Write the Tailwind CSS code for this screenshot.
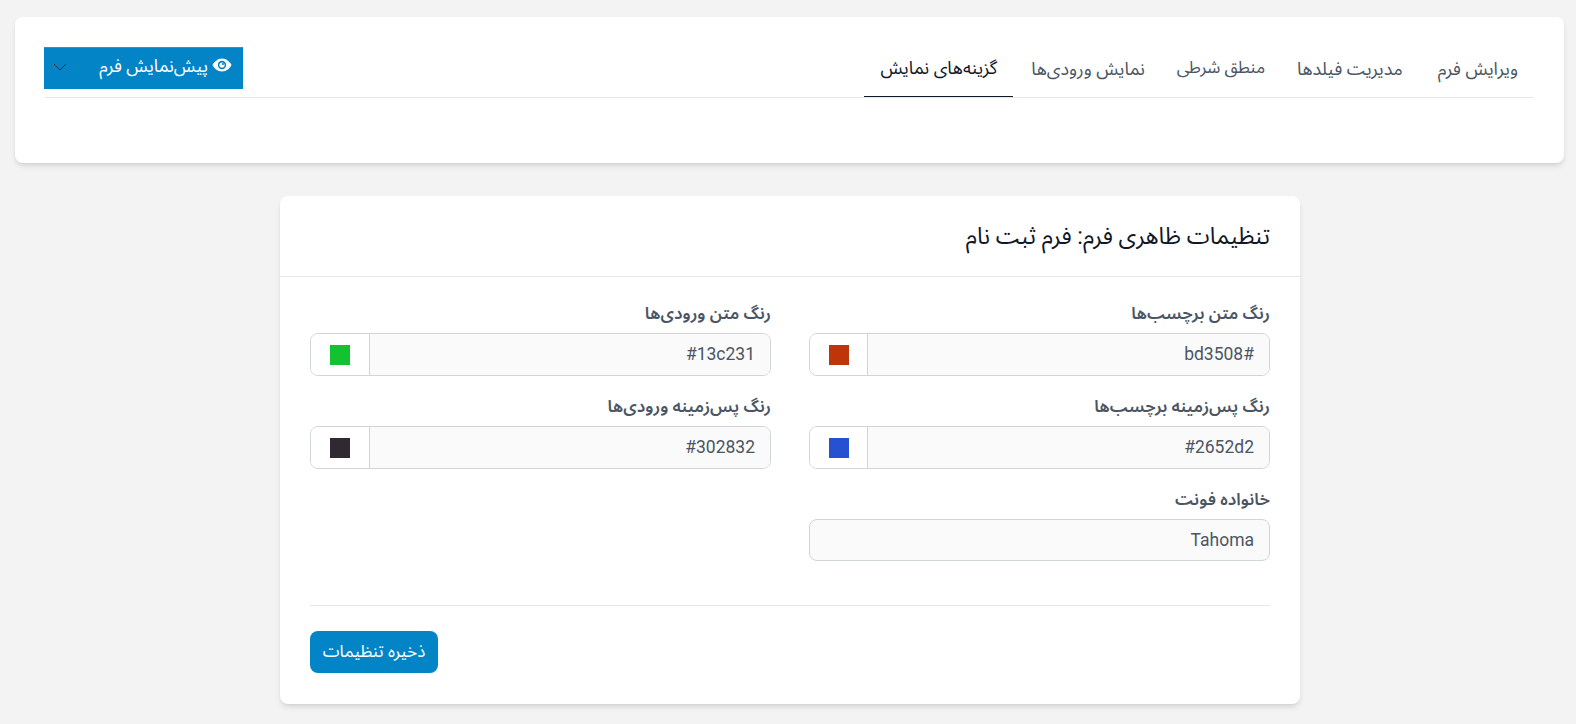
<!DOCTYPE html>
<html lang="fa" dir="rtl">
<head>
    <meta charset="UTF-8">
    <meta name="viewport" content="width=device-width, initial-scale=1.0">
    <title>تنظیمات ظاهری فرم</title>
    <script src="https://cdn.jsdelivr.net/npm/@tailwindcss/browser@4"></script>
</head>
<body class="bg-[#f3f3f3] min-h-screen font-['Roboto','Noto_Sans_Arabic','Vazirmatn','DejaVu_Sans',sans-serif] overflow-hidden">
    <div class="pt-[17px] pr-[12px] pl-[15px]">
        <!-- Top card with tabs -->
        <div class="h-[146px] bg-white rounded-lg shadow-md pt-[30px] pr-[30px] pl-[30px]">
            <div class="flex items-end justify-between h-[51px] border-b border-[#e5e7eb]">
                <nav class="flex h-[51px] text-[18px] text-[#4b5563]">
                    <a class="flex items-center pb-[7px] pr-4 pl-[17px]">ویرایش فرم</a>
                    <a class="flex items-center pb-[7px] px-[18px]">مدیریت فیلدها</a>
                    <a class="flex items-center justify-center pb-[7px] w-[116px] text-[17px]">منطق شرطی</a>
                    <a class="flex items-center pb-[7px] px-[18px]">نمایش ورودی‌ها</a>
                    <a class="flex items-center pb-[7px] px-4 text-[#111827] border-b border-[#111827] h-[51px]">گزینه‌های نمایش</a>
                </nav>
                <div class="flex items-center justify-between w-[199px] h-[42px] mb-[8px] -ml-px bg-[#0284c7] border-t border-[#2b93cc] pr-[11px] pl-[9px]">
                    <span class="flex items-center gap-1 text-white text-[17.6px] leading-none -mt-[4px]">
                        <svg class="w-5 h-5 -mt-1" viewBox="0 0 20 20" fill="white"><path d="M10 3.500C5.500 3.500 2 7 .5 10 2 13 5.500 16.500 10 16.500S18 13 19.500 10C18 7 14.500 3.500 10 3.500Z"/><circle cx="10" cy="10" r="4.200" fill="#0284c7"/><circle cx="10" cy="10" r="2.600" fill="white"/><circle cx="11" cy="9" r="1" fill="#0284c7"/></svg>
                        پیش‌نمایش فرم
                    </span>
                    <svg class="w-[14px] h-[8px] -mt-1" viewBox="0 0 14 8" fill="none" stroke="#1f2937" stroke-width="1"><path d="M1 1l6 6 6-6"/></svg>
                </div>
            </div>
        </div>

        <!-- Settings card -->
        <div class="w-[1020px] h-[508px] mt-[33px] mr-[264px] bg-white rounded-lg shadow-md">
            <div class="h-[81px] flex items-center px-[30px] pt-px border-b border-[#e5e7eb]">
                <h2 class="text-[23.2px] text-[#111827]">تنظیمات ظاهری فرم: فرم ثبت نام</h2>
            </div>
            <div class="px-[30px] pt-[26px]">
                <div class="grid grid-cols-2 gap-x-[38px] gap-y-[20px]">
                    <div>
                        <label class="block h-[30px] text-[17px] leading-[20px] font-semibold text-[#4b5563]">رنگ متن برچسب‌ها</label>
                        <div class="flex h-[43px] rounded-lg border border-[#d1d5db] overflow-hidden">
                            <div class="flex-1 flex items-center pr-[15px] pl-4 bg-[#fafafa] text-[17.5px] text-[#4b5563]">#bd3508</div>
                            <div class="w-[58px] flex items-center justify-center border-r border-[#d1d5db] bg-white"><span class="w-5 h-5 bg-[#bd3508]"></span></div>
                        </div>
                    </div>
                    <div>
                        <label class="block h-[30px] text-[17px] leading-[20px] font-semibold text-[#4b5563]">رنگ متن ورودی‌ها</label>
                        <div class="flex h-[43px] rounded-lg border border-[#d1d5db] overflow-hidden">
                            <div class="flex-1 flex items-center pr-[15px] pl-4 bg-[#fafafa] text-[17.5px] text-[#4b5563]">#13c231</div>
                            <div class="w-[59px] flex items-center justify-center border-r border-[#d1d5db] bg-white"><span class="w-5 h-5 bg-[#13c231]"></span></div>
                        </div>
                    </div>
                    <div>
                        <label class="block h-[30px] text-[17px] leading-[20px] font-semibold text-[#4b5563]">رنگ پس‌زمینه برچسب‌ها</label>
                        <div class="flex h-[43px] rounded-lg border border-[#d1d5db] overflow-hidden">
                            <div class="flex-1 flex items-center pr-[15px] pl-4 bg-[#fafafa] text-[17.5px] text-[#4b5563]">#2652d2</div>
                            <div class="w-[58px] flex items-center justify-center border-r border-[#d1d5db] bg-white"><span class="w-5 h-5 bg-[#2652d2]"></span></div>
                        </div>
                    </div>
                    <div>
                        <label class="block h-[30px] text-[17px] leading-[20px] font-semibold text-[#4b5563]">رنگ پس‌زمینه ورودی‌ها</label>
                        <div class="flex h-[43px] rounded-lg border border-[#d1d5db] overflow-hidden">
                            <div class="flex-1 flex items-center pr-[15px] pl-4 bg-[#fafafa] text-[17.5px] text-[#4b5563]">#302832</div>
                            <div class="w-[59px] flex items-center justify-center border-r border-[#d1d5db] bg-white"><span class="w-5 h-5 bg-[#302832]"></span></div>
                        </div>
                    </div>
                    <div>
                        <label class="block h-[30px] text-[17px] leading-[20px] font-semibold text-[#4b5563]">خانواده فونت</label>
                        <div class="flex items-center h-[42px] pr-[15px] pl-4 rounded-lg border border-[#d1d5db] bg-[#fafafa] text-[17.5px] text-[#4b5563]">Tahoma</div>
                    </div>
                </div>
                <div class="flex justify-end mt-[44px] pt-[25px] border-t border-[#e5e7eb]">
                    <button class="h-[42px] w-[128px] pb-px rounded-lg bg-[#0284c7] text-white text-[17px]">ذخیره تنظیمات</button>
                </div>
            </div>
        </div>
    </div>
</body>
</html>
